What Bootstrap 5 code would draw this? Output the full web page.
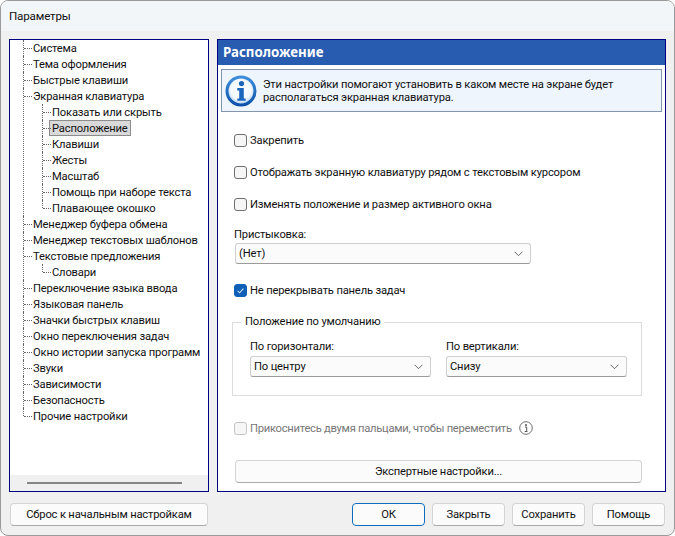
<!DOCTYPE html>
<html lang="ru">
<head>
  <meta charset="UTF-8" />
  <title>Параметры</title>
  <link href="https://cdn.jsdelivr.net/npm/bootstrap@5.3.3/dist/css/bootstrap.min.css" rel="stylesheet">
  <style>
    html, body {
      background-color: #fff;
      margin: 0;
      overflow: hidden;
    }
    body, .form-select, .btn, legend {
      font-family: Roboto, "Noto Sans", sans-serif;
      font-size: 11.2px;
      letter-spacing: -0.17px;
      color: #111;
    }
    .win {
      width: 675px;
      height: 536px;
      background-color: #f0f0f0;
      border: 1px solid #9a9a9a;
      border-radius: 8px;
      overflow: hidden;
    }
    .titlebar {
      height: 30px;
      padding: 1px 0 0 8px;
      background-color: #f3f6f9;
      font-size: 11.6px;
    }
    .main {
      height: 453px;
      margin: 8px 8px 0 8px;
      gap: 8px;
    }
    .box {
      border: 1px solid #000080;
      background-color: #fff;
    }
    .tree-box { width: 200px; }
    .panel { width: 449px; }

    /* tree */
    .tree, .tree ul {
      list-style: none;
      margin: 0;
      padding: 0;
    }
    .tree { padding-left: 13px; }
    .tree ul { padding-left: 9px; }
    .tree li { position: relative; padding-left: 10px; }
    .tree li::before {
      content: "";
      position: absolute;
      left: 0;
      top: 0;
      bottom: 0;
      border-left: 1px dotted #666;
    }
    .tree li:last-child::before { bottom: auto; height: 8px; }
    .tree li::after {
      content: "";
      position: absolute;
      left: 1px;
      top: 8px;
      width: 8px;
      border-top: 1px dotted #666;
    }
    .tree-row {
      display: block;
      width: fit-content;
      height: 16px;
      line-height: 18px;
      white-space: nowrap;
    }
    .tree-row.sel {
      background-color: #d9d9d9;
      outline: 1px solid #8c8c8c;
      outline-offset: -1px;
      padding: 0 3px;
      margin-left: -3px;
    }
    .hscroll {
      height: 16px;
      background-color: #f0f0f0;
      padding: 7px 26px 0 17px;
    }
    .hscroll div {
      height: 2px;
      background-color: #858585;
    }

    /* right panel */
    .panel-head {
      height: 25px;
      background-color: #275cb0;
      color: #fff;
      font-family: "Noto Sans", sans-serif;
      font-weight: 700;
      font-size: 13.3px;
      letter-spacing: 0;
      padding-left: 5px;
    }
    .info {
      height: 43px;
      margin: 4px 3px 0 3px;
      padding-left: 3px;
      gap: 6px;
      background-color: #eef5fd;
      border: 1px solid #8496ae;
      line-height: 13px;
    }
    .opts { padding: 0 24px 0 16px; }
    .chk { height: 16px; gap: 3px; }
    .chk span { padding-top: 2px; }
    .chk .form-check-input {
      width: 13px;
      height: 13px;
      margin: 0;
      flex-shrink: 0;
      border: 1px solid #6e6e6e;
      border-radius: 3px;
      background-color: #f6f6f6;
    }
    .chk .form-check-input:checked {
      background-color: #0f5fb8;
      border-color: #0f5fb8;
      background-image: url("data:image/svg+xml,%3csvg xmlns='http://www.w3.org/2000/svg' viewBox='0 0 13 13'%3e%3cpath fill='none' stroke='%23d5e6f8' stroke-width='1.2' d='M3 6.8l2.4 2.4L10 4.2'/%3e%3c/svg%3e");
    }
    .chk .form-check-input:disabled {
      opacity: 1;
      background-color: #f6f6f6;
      border-color: #c4c4c4;
    }
    .chk-1 { margin-top: 20px; }
    .chk-2 { margin-top: 16px; }
    .chk-3 { margin-top: 18px; }
    .chk-4 { margin-top: 24px; }
    .muted { color: #777; letter-spacing: -0.26px; }
    .lbl { line-height: 14px; height: 14px; margin-bottom: 2px; }
    .lbl-dock { margin: 16px 0 1px 0; }
    .form-select {
      height: 21px;
      min-height: 0;
      padding: 0 20px 0 3px;
      line-height: 19px;
      border: 1px solid #cfcfcf;
      border-bottom-color: #9a9a9a;
      border-radius: 3px;
      background-color: #fbfbfb;
      background-size: 9px 7px;
      background-position: right 7px center;
      background-image: url("data:image/svg+xml,%3csvg xmlns='http://www.w3.org/2000/svg' viewBox='0 0 10 8'%3e%3cpath fill='none' stroke='%23555' d='M.5 2l4.5 4.5L9.5 2'/%3e%3c/svg%3e");
    }
    .dock { width: 296px; margin-left: 1px; }
    fieldset.group {
      width: 410px;
      height: 81px;
      margin: 17px 0 0 -2px;
      padding: 0 14px 0 17px;
      border: 1px solid #dcdcdc;
      gap: 15px;
    }
    .group-col { width: 181px; margin-top: 11px; }
    .group legend {
      float: none;
      width: auto;
      margin: 0 0 0 -9px;
      padding: 0 4px;
      line-height: 14px;
      font-size: 11.2px;
    }
    .btn-win {
      height: 23px;
      padding: 0;
      line-height: 20px;
      font-size: 11.2px;
      color: #111;
      background-color: #fbfbfb;
      border: 1px solid #d4d4d4;
      border-bottom-color: #aaa;
      border-radius: 4px;
    }
    .btn-win.def {
      border: 1px solid #0f6cbd;
    }
    .expert { width: 407px; margin: 24px 0 0 1px; }
    .footer { margin: 11px 9px 0 9px; }
    .reset { width: 198px; }
    .act { width: 73px; }
    .footer .gap-act { gap: 7px; }
  </style>
</head>
<body>
  <div class="win d-flex flex-column">
    <div class="titlebar d-flex align-items-center">Параметры</div>

    <div class="main d-flex">
      <div class="box tree-box d-flex flex-column">
        <div class="flex-grow-1 overflow-hidden">
          <ul class="tree">
            <li><span class="tree-row">Система</span></li>
            <li><span class="tree-row">Тема оформления</span></li>
            <li><span class="tree-row">Быстрые клавиши</span></li>
            <li><span class="tree-row">Экранная клавиатура</span>
              <ul>
                <li><span class="tree-row">Показать или скрыть</span></li>
                <li><span class="tree-row sel">Расположение</span></li>
                <li><span class="tree-row">Клавиши</span></li>
                <li><span class="tree-row">Жесты</span></li>
                <li><span class="tree-row">Масштаб</span></li>
                <li><span class="tree-row">Помощь при наборе текста</span></li>
                <li><span class="tree-row">Плавающее окошко</span></li>
              </ul>
            </li>
            <li><span class="tree-row">Менеджер буфера обмена</span></li>
            <li><span class="tree-row">Менеджер текстовых шаблонов</span></li>
            <li><span class="tree-row">Текстовые предложения</span>
              <ul>
                <li><span class="tree-row">Словари</span></li>
              </ul>
            </li>
            <li><span class="tree-row">Переключение языка ввода</span></li>
            <li><span class="tree-row">Языковая панель</span></li>
            <li><span class="tree-row">Значки быстрых клавиш</span></li>
            <li><span class="tree-row">Окно переключения задач</span></li>
            <li><span class="tree-row">Окно истории запуска программ</span></li>
            <li><span class="tree-row">Звуки</span></li>
            <li><span class="tree-row">Зависимости</span></li>
            <li><span class="tree-row">Безопасность</span></li>
            <li><span class="tree-row">Прочие настройки</span></li>
          </ul>
        </div>
        <div class="hscroll"><div></div></div>
      </div>

      <div class="box panel d-flex flex-column">
        <div class="panel-head d-flex align-items-center">Расположение</div>
        <div class="info d-flex align-items-center">
          <svg width="32" height="32" viewBox="0 0 32 32" class="flex-shrink-0">
            <defs>
              <radialGradient id="inf" cx="50%" cy="45%" r="55%">
                <stop offset="0%" stop-color="#fff"/>
                <stop offset="75%" stop-color="#f2f8fe"/>
                <stop offset="100%" stop-color="#b5d4f2"/>
              </radialGradient>
              <linearGradient id="rim" x1="0" y1="0" x2="0" y2="1">
                <stop offset="0%" stop-color="#3f8fdc"/>
                <stop offset="100%" stop-color="#0b4fa6"/>
              </linearGradient>
            </defs>
            <circle cx="16" cy="16" r="15.5" fill="url(#rim)"/>
            <circle cx="16" cy="16" r="12.5" fill="url(#inf)"/>
            <circle cx="16.5" cy="8.6" r="2.6" fill="#1b66bd"/>
            <path d="M12.2 13h6.6v10.4h1.9v2.4h-8.4v-2.4h1.9v-8h-2z" fill="#1b66bd"/>
          </svg>
          <div>Эти настройки помогают установить в каком месте на экране будет<br>располагаться экранная клавиатура.</div>
        </div>

        <div class="opts">
          <label class="chk chk-1 d-flex align-items-center">
            <input type="checkbox" class="form-check-input"><span>Закрепить</span>
          </label>
          <label class="chk chk-2 d-flex align-items-center">
            <input type="checkbox" class="form-check-input"><span>Отображать экранную клавиатуру рядом с текстовым курсором</span>
          </label>
          <label class="chk chk-2 d-flex align-items-center">
            <input type="checkbox" class="form-check-input"><span>Изменять положение и размер активного окна</span>
          </label>

          <div class="lbl lbl-dock">Пристыковка:</div>
          <select class="form-select dock mt-0"><option>(Нет)</option></select>

          <label class="chk chk-3 d-flex align-items-center">
            <input type="checkbox" class="form-check-input" checked><span>Не перекрывать панель задач</span>
          </label>

          <fieldset class="group d-flex">
            <legend>Положение по умолчанию</legend>
            <div class="group-col">
              <div class="lbl">По горизонтали:</div>
              <select class="form-select"><option>По центру</option></select>
            </div>
            <div class="group-col">
              <div class="lbl">По вертикали:</div>
              <select class="form-select"><option>Снизу</option></select>
            </div>
          </fieldset>

          <label class="chk chk-4 d-flex align-items-center">
            <input type="checkbox" class="form-check-input" disabled><span class="muted">Прикоснитесь двумя пальцами, чтобы переместить</span>
            <svg width="14" height="14" viewBox="0 0 14 14" class="ms-1">
              <circle cx="7" cy="7" r="6.3" fill="none" stroke="#6e6e6e"/>
              <circle cx="7" cy="4" r="1" fill="#555"/>
              <path d="M6 6h1.7v4.2M5.8 10.5h2.6" fill="none" stroke="#555"/>
            </svg>
          </label>

          <button class="btn btn-win expert d-block">Экспертные настройки...</button>
        </div>
      </div>
    </div>

    <div class="footer d-flex justify-content-between">
      <button class="btn btn-win reset">Сброс к начальным настройкам</button>
      <div class="d-flex gap-act">
        <button class="btn btn-win def act">ОК</button>
        <button class="btn btn-win act">Закрыть</button>
        <button class="btn btn-win act">Сохранить</button>
        <button class="btn btn-win act">Помощь</button>
      </div>
    </div>
  </div>
  <script src="https://cdn.jsdelivr.net/npm/bootstrap@5.3.3/dist/js/bootstrap.bundle.min.js"></script>
</body>
</html>
